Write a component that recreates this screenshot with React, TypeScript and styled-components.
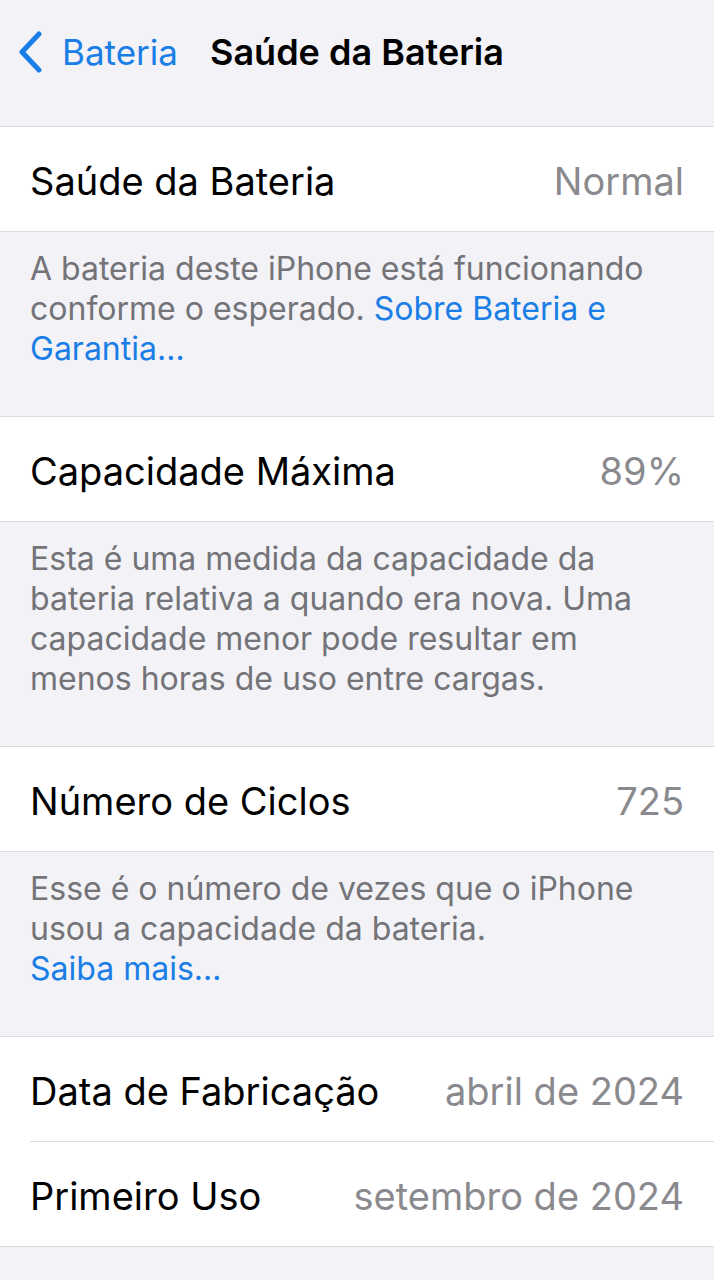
import * as React from 'react';
import styled, { createGlobalStyle } from 'styled-components';

const GlobalStyle = createGlobalStyle`
    html, body {
        margin: 0;
        padding: 0;
        background: #f2f2f7;
    }
    body {
        font-family: Inter, "Liberation Sans", sans-serif;
        -webkit-font-smoothing: antialiased;
    }
`;

const Page = styled.div`
    width: 714px;
    min-height: 1280px;
    background: #f2f2f7;
    overflow: hidden;
`;

const NavBar = styled.div`
    height: 104px;
    display: grid;
    grid-template-columns: 1fr auto 1fr;
    align-items: center;
    margin-bottom: 22px;
`;

const BackButton = styled.div`
    display: flex;
    align-items: center;
    gap: 19px;
    padding-left: 17px;
    color: #1a7ee6;
    font-size: 35px;
`;

const Title = styled.div`
    font-size: 36px;
    font-weight: 600;
    color: #000;
`;

const Group = styled.div`
    background: #fff;
    border-top: 1px solid #d9d9de;
    border-bottom: 1px solid #d9d9de;
`;

const Row = styled.div<{ $divider?: boolean }>`
    height: 104px;
    margin-left: 30px;
    padding-right: 30px;
    display: flex;
    align-items: center;
    justify-content: space-between;
    border-bottom: ${p => (p.$divider ? '1px solid #dcdce0' : 'none')};
`;

const Label = styled.span`
    font-size: 38px;
    color: #000;
    padding-top: 3px;
`;

const Value = styled.span`
    font-size: 38px;
    color: #8a8a8e;
    padding-top: 3px;
`;

const Footer = styled.div`
    padding: 17px 30px 47px;
    font-size: 32px;
    line-height: 40px;
    color: #737378;
`;

const Link = styled.span`
    color: #1a7ee6;
`;

const Chevron = () => (
    <svg width="26" height="42" viewBox="0 0 26 42" fill="none">
        <path
            d="M22 3 L5 21 L22 39"
            stroke="#1a7ee6"
            strokeWidth="5"
            strokeLinecap="round"
            strokeLinejoin="round"
        />
    </svg>
);

const App = () => {
    return (
        <Page>
            <GlobalStyle />
            <NavBar>
                <BackButton>
                    <Chevron />
                    Bateria
                </BackButton>
                <Title>Saúde da Bateria</Title>
                <div />
            </NavBar>

            <Group>
                <Row>
                    <Label>Saúde da Bateria</Label>
                    <Value>Normal</Value>
                </Row>
            </Group>
            <Footer>
                A bateria deste iPhone está funcionando<br />
                conforme o esperado. <Link>Sobre Bateria e</Link><br />
                <Link>Garantia…</Link>
            </Footer>

            <Group>
                <Row>
                    <Label>Capacidade Máxima</Label>
                    <Value>89%</Value>
                </Row>
            </Group>
            <Footer>
                Esta é uma medida da capacidade da<br />
                bateria relativa a quando era nova. Uma<br />
                capacidade menor pode resultar em<br />
                menos horas de uso entre cargas.
            </Footer>

            <Group>
                <Row>
                    <Label>Número de Ciclos</Label>
                    <Value>725</Value>
                </Row>
            </Group>
            <Footer>
                Esse é o número de vezes que o iPhone<br />
                usou a capacidade da bateria.<br />
                <Link>Saiba mais…</Link>
            </Footer>

            <Group>
                <Row $divider>
                    <Label>Data de Fabricação</Label>
                    <Value>abril de 2024</Value>
                </Row>
                <Row>
                    <Label>Primeiro Uso</Label>
                    <Value>setembro de 2024</Value>
                </Row>
            </Group>
        </Page>
    );
};

export default App;
